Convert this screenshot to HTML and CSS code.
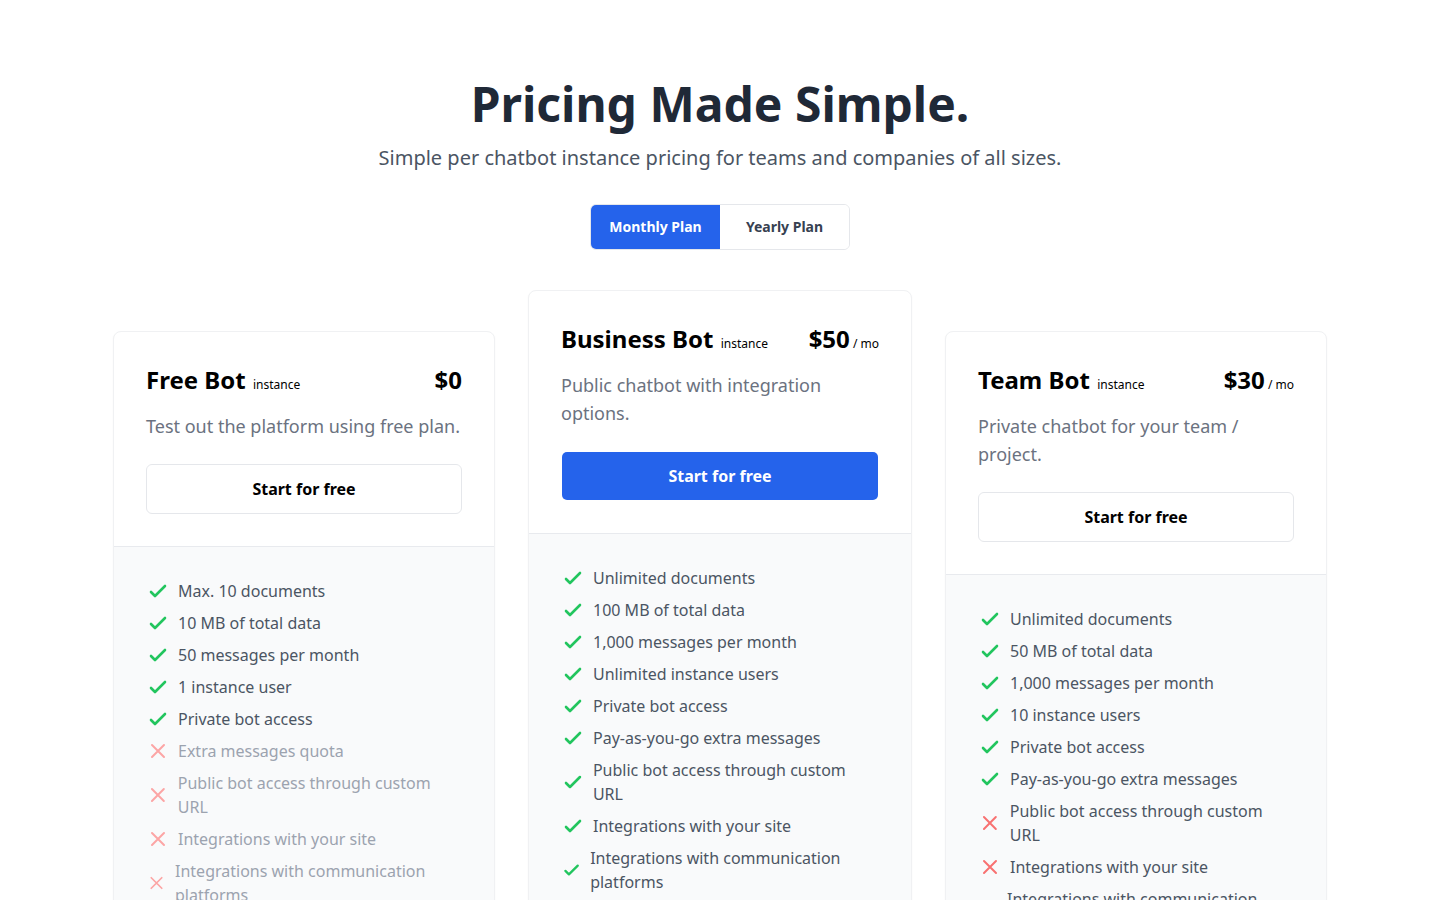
FILE: index.html
```html
<!DOCTYPE html>
<html lang="en">
<head>
<meta charset="utf-8">
<title>Pricing Made Simple.</title>
<link rel="stylesheet" href="styles.css">
</head>
<body>
<main class="page">
  <section class="hero">
    <h1 class="hero-title">Pricing Made Simple.</h1>
    <p class="hero-sub">Simple per chatbot instance pricing for teams and companies of all sizes.</p>
    <div class="toggle">
      <button class="toggle-btn active">Monthly Plan</button>
      <button class="toggle-btn">Yearly Plan</button>
    </div>
  </section>

  <section class="plans">
    <!-- Free -->
    <article class="card side">
      <div class="card-head">
        <div class="title-row">
          <h2 class="plan-name">Free Bot <span class="unit">instance</span></h2>
          <div class="price">$0</div>
        </div>
        <p class="plan-desc">Test out the platform using free plan.</p>
        <button class="cta outline">Start for free</button>
      </div>
      <ul class="features">
        <li class="feat"><svg class="ic ok" viewBox="0 0 24 24" width="24" height="24"><path d="M5 13l4 4L19 7"/></svg><span>Max. 10 documents</span></li>
        <li class="feat"><svg class="ic ok" viewBox="0 0 24 24" width="24" height="24"><path d="M5 13l4 4L19 7"/></svg><span>10 MB of total data</span></li>
        <li class="feat"><svg class="ic ok" viewBox="0 0 24 24" width="24" height="24"><path d="M5 13l4 4L19 7"/></svg><span>50 messages per month</span></li>
        <li class="feat"><svg class="ic ok" viewBox="0 0 24 24" width="24" height="24"><path d="M5 13l4 4L19 7"/></svg><span>1 instance user</span></li>
        <li class="feat"><svg class="ic ok" viewBox="0 0 24 24" width="24" height="24"><path d="M5 13l4 4L19 7"/></svg><span>Private bot access</span></li>
        <li class="feat off"><svg class="ic no-light" viewBox="0 0 24 24" width="24" height="24"><path d="M6 18L18 6M6 6l12 12"/></svg><span>Extra messages quota</span></li>
        <li class="feat off"><svg class="ic no-light" viewBox="0 0 24 24" width="24" height="24"><path d="M6 18L18 6M6 6l12 12"/></svg><span>Public bot access through custom URL</span></li>
        <li class="feat off"><svg class="ic no-light" viewBox="0 0 24 24" width="24" height="24"><path d="M6 18L18 6M6 6l12 12"/></svg><span>Integrations with your site</span></li>
        <li class="feat off"><svg class="ic no-light" viewBox="0 0 24 24" width="24" height="24"><path d="M6 18L18 6M6 6l12 12"/></svg><span>Integrations with communication platforms</span></li>
      </ul>
    </article>

    <!-- Business -->
    <article class="card">
      <div class="card-head">
        <div class="title-row">
          <h2 class="plan-name">Business Bot <span class="unit">instance</span></h2>
          <div class="price">$50<span class="per"> / mo</span></div>
        </div>
        <p class="plan-desc">Public chatbot with integration options.</p>
        <button class="cta solid">Start for free</button>
      </div>
      <ul class="features">
        <li class="feat"><svg class="ic ok" viewBox="0 0 24 24" width="24" height="24"><path d="M5 13l4 4L19 7"/></svg><span>Unlimited documents</span></li>
        <li class="feat"><svg class="ic ok" viewBox="0 0 24 24" width="24" height="24"><path d="M5 13l4 4L19 7"/></svg><span>100 MB of total data</span></li>
        <li class="feat"><svg class="ic ok" viewBox="0 0 24 24" width="24" height="24"><path d="M5 13l4 4L19 7"/></svg><span>1,000 messages per month</span></li>
        <li class="feat"><svg class="ic ok" viewBox="0 0 24 24" width="24" height="24"><path d="M5 13l4 4L19 7"/></svg><span>Unlimited instance users</span></li>
        <li class="feat"><svg class="ic ok" viewBox="0 0 24 24" width="24" height="24"><path d="M5 13l4 4L19 7"/></svg><span>Private bot access</span></li>
        <li class="feat"><svg class="ic ok" viewBox="0 0 24 24" width="24" height="24"><path d="M5 13l4 4L19 7"/></svg><span>Pay-as-you-go extra messages</span></li>
        <li class="feat"><svg class="ic ok" viewBox="0 0 24 24" width="24" height="24"><path d="M5 13l4 4L19 7"/></svg><span>Public bot access through custom URL</span></li>
        <li class="feat"><svg class="ic ok" viewBox="0 0 24 24" width="24" height="24"><path d="M5 13l4 4L19 7"/></svg><span>Integrations with your site</span></li>
        <li class="feat"><svg class="ic ok" viewBox="0 0 24 24" width="24" height="24"><path d="M5 13l4 4L19 7"/></svg><span>Integrations with communication platforms</span></li>
      </ul>
    </article>

    <!-- Team -->
    <article class="card side">
      <div class="card-head">
        <div class="title-row">
          <h2 class="plan-name">Team Bot <span class="unit">instance</span></h2>
          <div class="price">$30<span class="per"> / mo</span></div>
        </div>
        <p class="plan-desc">Private chatbot for your team / project.</p>
        <button class="cta outline">Start for free</button>
      </div>
      <ul class="features">
        <li class="feat"><svg class="ic ok" viewBox="0 0 24 24" width="24" height="24"><path d="M5 13l4 4L19 7"/></svg><span>Unlimited documents</span></li>
        <li class="feat"><svg class="ic ok" viewBox="0 0 24 24" width="24" height="24"><path d="M5 13l4 4L19 7"/></svg><span>50 MB of total data</span></li>
        <li class="feat"><svg class="ic ok" viewBox="0 0 24 24" width="24" height="24"><path d="M5 13l4 4L19 7"/></svg><span>1,000 messages per month</span></li>
        <li class="feat"><svg class="ic ok" viewBox="0 0 24 24" width="24" height="24"><path d="M5 13l4 4L19 7"/></svg><span>10 instance users</span></li>
        <li class="feat"><svg class="ic ok" viewBox="0 0 24 24" width="24" height="24"><path d="M5 13l4 4L19 7"/></svg><span>Private bot access</span></li>
        <li class="feat"><svg class="ic ok" viewBox="0 0 24 24" width="24" height="24"><path d="M5 13l4 4L19 7"/></svg><span>Pay-as-you-go extra messages</span></li>
        <li class="feat"><svg class="ic no" viewBox="0 0 24 24" width="24" height="24"><path d="M6 18L18 6M6 6l12 12"/></svg><span>Public bot access through custom URL</span></li>
        <li class="feat"><svg class="ic no" viewBox="0 0 24 24" width="24" height="24"><path d="M6 18L18 6M6 6l12 12"/></svg><span>Integrations with your site</span></li>
        <li class="feat"><svg class="ic no" viewBox="0 0 24 24" width="24" height="24"><path d="M6 18L18 6M6 6l12 12"/></svg><span>Integrations with communication platforms</span></li>
      </ul>
    </article>
  </section>
</main>
</body>
</html>
```

FILE: styles.css
```css
* { box-sizing: border-box; }

html, body {
  margin: 0;
  padding: 0;
  background: #ffffff;
}

body {
  font-family: "Noto Sans", "Open Sans", "DejaVu Sans", sans-serif;
  color: #111827;
}

.page {
  max-width: 1280px;
  margin: 0 auto;
  padding: 80px 32px 80px;
}

.hero {
  display: flex;
  flex-direction: column;
  align-items: center;
  text-align: center;
}

.hero-title {
  margin: 0;
  font-size: 48px;
  line-height: 48px;
  font-weight: 700;
  color: #1f2937;
}

.hero-sub {
  margin: 16px 0 0;
  font-size: 20px;
  line-height: 28px;
  color: #4b5563;
}

.toggle {
  margin-top: 32px;
  display: grid;
  grid-template-columns: 129px 129px;
  border: 1px solid #e5e7eb;
  border-radius: 6px;
  overflow: hidden;
}

.toggle-btn {
  font-family: inherit;
  font-size: 14px;
  line-height: 20px;
  font-weight: 700;
  padding: 12px 0;
  border: 0;
  background: #ffffff;
  color: #374151;
  cursor: pointer;
}

.toggle-btn.active {
  background: #2563eb;
  color: #ffffff;
}

.plans {
  margin-top: 40px;
  display: grid;
  grid-template-columns: repeat(3, 1fr);
  gap: 32px;
  align-items: start;
}

.card {
  border: 1px solid #f0f1f3;
  border-radius: 8px;
  background: #ffffff;
  box-shadow: 0 1px 2px rgba(0, 0, 0, 0.04);
  overflow: hidden;
}

.card.side {
  margin: 41px 1px 0;
}

.card-head {
  padding: 32px;
  border-bottom: 1px solid #e8eaee;
}

.title-row {
  display: flex;
  justify-content: space-between;
  align-items: baseline;
}

.plan-name {
  margin: 0;
  font-size: 24px;
  line-height: 32px;
  font-weight: 700;
  color: #000000;
}

.unit {
  font-size: 12px;
  line-height: 16px;
  font-weight: 400;
  margin-left: 1px;
}

.price {
  font-size: 24px;
  line-height: 32px;
  font-weight: 700;
  color: #000000;
}

.per {
  font-size: 12px;
  line-height: 16px;
  font-weight: 400;
}

.plan-desc {
  margin: 16px 0 0;
  font-size: 18px;
  line-height: 28px;
  color: #6b7280;
}

.cta {
  display: block;
  width: 100%;
  margin-top: 24px;
  font-family: inherit;
  font-size: 16px;
  line-height: 24px;
  font-weight: 700;
  border-radius: 6px;
  cursor: pointer;
}

.cta.outline {
  padding: 12px 16px;
  background: #ffffff;
  border: 1px solid #e5e7eb;
  color: #000000;
}

.cta.solid {
  padding: 12px 16px;
  background: #2563eb;
  background-clip: padding-box;
  border: 1px solid transparent;
  color: #ffffff;
}

.features {
  list-style: none;
  margin: 0;
  padding: 32px;
  background: #f9fafb;
  display: flex;
  flex-direction: column;
  gap: 8px;
}

.feat {
  display: flex;
  align-items: center;
  gap: 8px;
  font-size: 16px;
  line-height: 24px;
  color: #4b5563;
}

.feat.off {
  color: #9ca3af;
}

.ic {
  width: 24px;
  height: 24px;
  fill: none;
  stroke-width: 2;
  stroke-linecap: round;
  stroke-linejoin: round;
}

.ic.ok { stroke: #22c55e; stroke-width: 2.6; }
.ic.no { stroke: #f87171; }
.ic.no-light { stroke: #fca5a5; }
```
